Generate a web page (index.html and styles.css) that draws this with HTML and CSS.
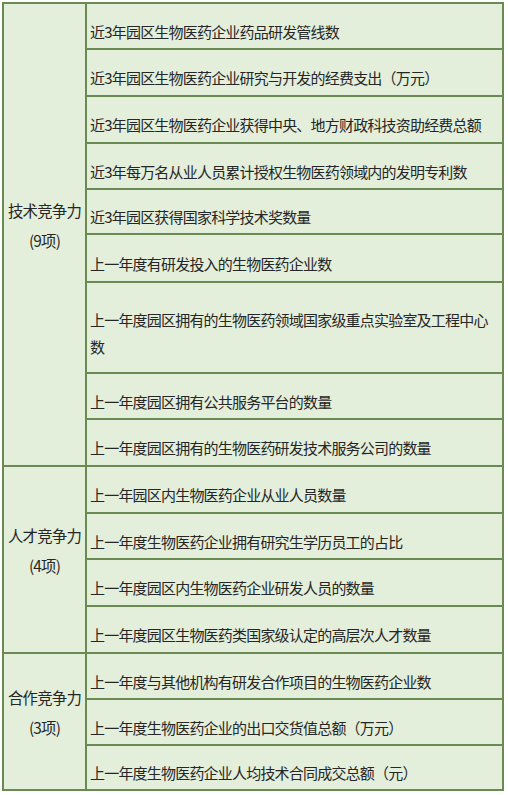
FILE: index.html
```html
<!DOCTYPE html>
<html lang="zh-CN">
<head>
<meta charset="utf-8">
<title>生物医药园区竞争力指标</title>
<link rel="stylesheet" href="styles.css">
</head>
<body>
<div class="matrix">
  <div class="group g1"><span>技术竞争力</span><span>(9项)</span></div>
  <div class="item">近3年园区生物医药企业药品研发管线数</div>
  <div class="item">近3年园区生物医药企业研究与开发的经费支出（万元）</div>
  <div class="item">近3年园区生物医药企业获得中央、地方财政科技资助经费总额</div>
  <div class="item">近3年每万名从业人员累计授权生物医药领域内的发明专利数</div>
  <div class="item">近3年园区获得国家科学技术奖数量</div>
  <div class="item">上一年度有研发投入的生物医药企业数</div>
  <div class="item">上一年度园区拥有的生物医药领域国家级重点实验室及工程中心数</div>
  <div class="item">上一年度园区拥有公共服务平台的数量</div>
  <div class="item">上一年度园区拥有的生物医药研发技术服务公司的数量</div>
  <div class="group g2"><span>人才竞争力</span><span>(4项)</span></div>
  <div class="item">上一年园区内生物医药企业从业人员数量</div>
  <div class="item">上一年度生物医药企业拥有研究生学历员工的占比</div>
  <div class="item">上一年度园区内生物医药企业研发人员的数量</div>
  <div class="item">上一年度园区生物医药类国家级认定的高层次人才数量</div>
  <div class="group g3"><span>合作竞争力</span><span>(3项)</span></div>
  <div class="item">上一年度与其他机构有研发合作项目的生物医药企业数</div>
  <div class="item">上一年度生物医药企业的出口交货值总额（万元）</div>
  <div class="item">上一年度生物医药企业人均技术合同成交总额（元）</div>
</div>
</body>
</html>
```

FILE: styles.css
```css
html, body {
  margin: 0;
  padding: 0;
  background: #ffffff;
}
body {
  padding: 2px 0 0 2px;
  font-family: "Noto Sans CJK SC", "Noto Sans", sans-serif;
  color: #262626;
}
.matrix {
  width: 502px;
  box-sizing: border-box;
  display: grid;
  grid-template-columns: 81px 1fr;
  grid-template-rows: 44px 45px 45px 44px 43px 46px 89px 44px 45px 45px 44px 45px 45px 44px 44px 43px;
  gap: 2px;
  padding: 2px;
  background: #698a52;
}
.group, .item {
  background: #e3eedb;
}
.group {
  grid-column: 1;
  display: flex;
  flex-direction: column;
  align-items: center;
  justify-content: center;
  font-size: 15.4px;
  letter-spacing: -0.8px;
  line-height: 30px;
  padding-bottom: 20px;
}
.g1 { grid-row: 1 / span 9; }
.g2 { grid-row: 10 / span 4; }
.g3 { grid-row: 14 / span 3; }
.item {
  grid-column: 2;
  display: flex;
  align-items: center;
  padding: 10px 6px 0 3px;
  font-size: 15px;
  letter-spacing: -0.8px;
  line-height: 27px;
}
```
